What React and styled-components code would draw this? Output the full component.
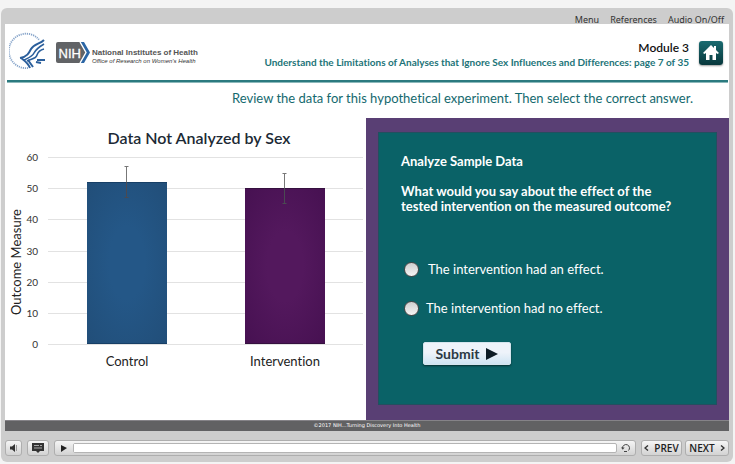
import React, { useState } from "react";
import styled, { createGlobalStyle, css } from "styled-components";

const color = {
  teal: "#0a6267",
  tealText: "#14696e",
  purple: "#593f74",
  frame: "#cdcdcd",
  footer: "#616163",
  ink: "#1c2a35",
};

const GlobalStyle = createGlobalStyle`
  * { box-sizing: border-box; }
  body {
    margin: 0;
    background: #f4f4f4;
    font-family: Lato, "Open Sans", sans-serif;
    font-variant-ligatures: none;
  }
  h1, h2, p { margin: 0; }
`;

const Page = styled.div`
  padding: 8px 2px 2px 1px;
`;

const Frame = styled.div`
  background: ${color.frame};
  border-radius: 6px;
  padding: 0 4px;
`;

const TopNav = styled.nav`
  display: flex;
  justify-content: flex-end;
  gap: 11px;
  height: 16px;
  padding: 5px 5px 0 0;
`;

const NavLink = styled.a`
  font-family: "Noto Sans", "Open Sans", sans-serif;
  font-size: 9px;
  line-height: 14px;
  color: #333;
  text-decoration: none;
`;

const Slide = styled.main`
  background: #fff;
`;

const Header = styled.header`
  display: flex;
  justify-content: space-between;
  height: 56px;
  padding: 8px 6px 0 4px;
`;

const Brand = styled.div`
  display: flex;
  align-items: flex-start;
`;

const NihMark = styled.div`
  padding: 10px 0 0 9px;
  line-height: 0;
`;

const BrandNames = styled.div`
  padding: 15px 0 0 2px;
  color: #555;
  white-space: nowrap;
  font-family: "Liberation Sans", Arial, sans-serif;
`;

const BrandName = styled.p`
  font-size: 8px;
  font-weight: bold;
  line-height: 11px;
`;

const BrandOffice = styled.p`
  font-size: 6px;
  font-style: italic;
  line-height: 6px;
  color: #333;
`;

const Heading = styled.div`
  display: flex;
  gap: 10px;
  text-align: right;
  white-space: nowrap;
`;

const Titles = styled.div`
  padding-top: 8px;
`;

const ModuleName = styled.p`
  font-size: 12px;
  font-weight: 600;
  line-height: 16px;
  color: #111;
`;

const Topic = styled.h1`
  font-size: 10px;
  font-weight: bold;
  line-height: 12px;
  color: #1c7478;
`;

const HomeButton = styled.button`
  display: grid;
  place-items: center;
  width: 24px;
  height: 24px;
  margin-top: 9px;
  padding: 0;
  border: 0;
  border-radius: 3px;
  background: linear-gradient(#1a6b70, #07373c);
  box-shadow: 0 1px 2px #0006;
`;

const Rule = styled.hr`
  height: 3px;
  margin: 0 1px 0 2px;
  border: 0;
  background: #2b7a7f;
  border-bottom: 1px solid #8cb9bb;
`;

const Instruction = styled.p`
  height: 35px;
  padding: 6px 36px 0 0;
  font-size: 13px;
  line-height: 18px;
  text-align: right;
  color: ${color.tealText};
`;

const Columns = styled.div`
  display: grid;
  grid-template-columns: 361fr 363fr;
`;

const Chart = styled.svg`
  display: block;
  width: 100%;
  font-family: Lato, sans-serif;
`;

const Quiz = styled.section`
  background: ${color.purple};
  padding: 14px 12px 15px 12px;
`;

const QuizForm = styled.form`
  height: 100%;
  padding: 20px 23px;
  background: ${color.teal};
  outline: 1px solid #234f5f;
  outline-offset: -1px;
  color: #fff;
`;

const QuizTitle = styled.h2`
  font-size: 13px;
  font-weight: bold;
  line-height: 18px;
`;

const Question = styled.legend`
  padding: 0;
  font-size: 13px;
  font-weight: bold;
  line-height: 15px;
`;

const Choices = styled.fieldset`
  margin: 14px 0 0;
  padding: 0;
  border: 0;
`;

const ChoiceList = styled.div`
  display: grid;
  gap: 21px;
  padding: 46px 0 0 3px;
`;

const Choice = styled.label`
  display: flex;
  align-items: center;
  gap: ${(p) => (p.$wide ? 9 : 7)}px;
  font-size: 13px;
  line-height: 18px;
`;

const Radio = styled.input`
  appearance: none;
  width: 15px;
  height: 15px;
  margin: 0;
  border: 1px solid #4c4646;
  border-radius: 50%;
  background: linear-gradient(#cfcfcf, #f4f4f4);
  &:checked {
    background: radial-gradient(circle, #222 3px, #e8e8e8 4px);
  }
`;

const Submit = styled.button`
  display: flex;
  align-items: center;
  justify-content: center;
  gap: 7px;
  width: 88px;
  height: 23px;
  margin: 25px 0 0 22px;
  padding: 0;
  border: 1px solid #d5e5ee;
  border-radius: 2px;
  background: linear-gradient(#eef3fa 45%, #cfe5f3);
  box-shadow: 0 1px 2px #0008;
  font: bold 14px/18px Lato, sans-serif;
  color: #2b3944;
`;

const Copyright = styled.footer`
  height: 11px;
  border-top: 1px solid #858388;
  background: ${color.footer};
  font-family: "DejaVu Sans", sans-serif;
  font-size: 5px;
  line-height: 9px;
  text-align: center;
  color: #fff;
`;

const Player = styled.div`
  display: flex;
  padding: 9px 0 6px;
`;

const raised = css`
  height: 16px;
  border: 1px solid #aeaeae;
  border-radius: 3px;
  background: linear-gradient(#f5f5f5, #d2d2d2);
`;

const PlayerButton = styled.button`
  ${raised}
  display: flex;
  align-items: center;
  justify-content: center;
  gap: 5px;
  width: ${(p) => p.$width}px;
  margin-right: ${(p) => p.$after || 0}px;
  padding: 0;
  font: 600 10px/14px "Open Sans", sans-serif;
  color: #222;
`;

const Timeline = styled.div`
  ${raised}
  display: flex;
  align-items: center;
  flex: 1;
  margin-right: 5px;
`;

const IconButton = styled.button`
  display: grid;
  place-items: center;
  width: 18px;
  height: 14px;
  padding: 0;
  border: 0;
  background: none;
`;

const Seek = styled.input`
  appearance: none;
  flex: 1;
  min-width: 0;
  height: 10px;
  margin: 0;
  border: 1px solid #b4b4b4;
  border-radius: 2px;
  background: #fff;
  &::-webkit-slider-thumb {
    appearance: none;
    width: 1px;
    height: 8px;
    background: #fff;
  }
`;

const HhsLogo = () => (
  <svg width="38" height="38" viewBox="0 0 38 38" role="img" aria-label="Department of Health and Human Services">
    <path d="M30 7.600A17.200 17.200 0 1 0 19 36" fill="none" stroke="#85a3c9" strokeWidth="1.8" strokeDasharray="1.2 .9" />
    <g fill="none" stroke="#2b5f9c" strokeLinejoin="round">
      <path d="M35 8C31 12 25 12 22 17C20 21 18 25 11 26" strokeWidth="2" />
      <path d="M35 12C30 15 27 17 25 21C23 25 19 26 15 28" strokeWidth="1.6" />
      <path d="M35 17C31 18 29 20 28 23C27 27 22 27 18 29" strokeWidth="1.6" />
      <path d="M12 26C16 29 19 31 21 36M19 28L24 35M28 28H36M27 30L32 31" strokeWidth="2" />
    </g>
  </svg>
);

const NihLogo = () => (
  <svg width="34" height="21" viewBox="0 0 34 21" role="img" aria-label="NIH">
    <path d="M2 0H24L30 10.500L24 21H2Q0 21 0 19V2Q0 0 2 0Z" fill="#616366" />
    <path d="M24 0H28L34 10.500L28 21H24L30 10.500Z" fill="#2c66a5" />
    <path d="M24 0L30 10.500L24 21" fill="none" stroke="#fff" strokeWidth="1.4" />
    <text x="2.500" y="15.500" fill="#fff" stroke="#fff" strokeWidth=".3" fontFamily="Liberation Sans" fontSize="13">NIH</text>
  </svg>
);

const HomeIcon = () => (
  <svg width="18" height="16" viewBox="0 0 18 16" aria-hidden="true">
    <path d="M9 0L1 8L2.500 9L4 8V15H7.500V10H10.500V15H14V8L15.500 9L17 8L14 5V1H12V3Z" fill="#fff" />
  </svg>
);

const Chevron = ({ d }) => (
  <svg width="5" height="6" viewBox="0 0 5 6" aria-hidden="true">
    <path d={d} fill="none" stroke="#333" strokeWidth="1.4" />
  </svg>
);

const PLOT = { top: 39, bottom: 226, left: 43, right: 358, max: 60 };
const yOf = (v) => Math.round(PLOT.bottom - (v * (PLOT.bottom - PLOT.top)) / PLOT.max);
const SERIES = [
  { label: "Control", value: 52, x: 82, fill: "url(#blue)", edge: "#173f66" },
  { label: "Intervention", value: 50, x: 240, fill: "url(#plum)", edge: "#35103f" },
];

const OutcomeChart = () => (
  <Chart viewBox="0 0 361 302" role="img" aria-label="Data Not Analyzed by Sex">
    <defs>
      <radialGradient id="blue" r="0.75">
        <stop offset="0.3" stopColor="#245787" />
        <stop offset="1" stopColor="#214d77" />
      </radialGradient>
      <radialGradient id="plum" r="0.75">
        <stop offset="0.3" stopColor="#53185d" />
        <stop offset="1" stopColor="#451050" />
      </radialGradient>
    </defs>
    <text x="194" y="26" textAnchor="middle" fontSize="16" fontWeight="600" fill={color.ink}>Data Not Analyzed by Sex</text>
    <text transform="translate(16 144) rotate(-90)" textAnchor="middle" fontSize="13" fill="#222">Outcome Measure</text>
    {[0, 10, 20, 30, 40, 50, 60].map((v) => (
      <g key={v}>
        <rect x={PLOT.left} y={yOf(v)} width={PLOT.right - PLOT.left} height="1" fill="#e2e2e2" />
        <text x="33" y={yOf(v) + 4} textAnchor="end" fontSize="10" fill="#333">{v}</text>
      </g>
    ))}
    {SERIES.map((s) => {
      const top = yOf(s.value);
      const high = yOf(s.value + 5);
      const low = yOf(s.value - 5);
      const mid = s.x + 39.5;
      return (
        <g key={s.label}>
          <rect x={s.x} y={top} width="80" height={PLOT.bottom - top} fill={s.fill} />
          <path d={`M${s.x} ${top + 0.5}h80M${s.x} ${PLOT.bottom - 0.5}h80`} stroke={s.edge} />
          <path d={`M${mid} ${high}V${top}M${mid - 2} ${high + 0.5}h4`} stroke="#777" fill="none" />
          <path d={`M${mid} ${top}V${low}M${mid - 2} ${low - 0.5}h4`} stroke="#4a4a52" fill="none" />
          <text x={s.x + 40} y="248" textAnchor="middle" fontSize="13" fill="#222">{s.label}</text>
        </g>
      );
    })}
  </Chart>
);

const CHOICES = [
  { value: "effect", text: "The intervention had an effect.", wide: true },
  { value: "none", text: "The intervention had no effect.", wide: false },
];

export default function App() {
  const [answer, setAnswer] = useState("");
  return (
    <Page>
      <GlobalStyle />
      <Frame>
        <TopNav>
          <NavLink href="#menu">Menu</NavLink>
          <NavLink href="#references">References</NavLink>
          <NavLink href="#audio">Audio On/Off</NavLink>
        </TopNav>
        <Slide>
          <Header>
            <Brand>
              <HhsLogo />
              <NihMark>
                <NihLogo />
              </NihMark>
              <BrandNames>
                <BrandName>National Institutes of Health</BrandName>
                <BrandOffice>Office of Research on Women's Health</BrandOffice>
              </BrandNames>
            </Brand>
            <Heading>
              <Titles>
                <ModuleName>Module 3</ModuleName>
                <Topic>Understand the Limitations of Analyses that Ignore Sex Influences and Differences: page 7 of 35</Topic>
              </Titles>
              <HomeButton aria-label="Home">
                <HomeIcon />
              </HomeButton>
            </Heading>
          </Header>
          <Rule />
          <Instruction>Review the data for this hypothetical experiment. Then select the correct answer.</Instruction>
          <Columns>
            <OutcomeChart />
            <Quiz>
              <QuizForm onSubmit={(e) => e.preventDefault()}>
                <QuizTitle>Analyze Sample Data</QuizTitle>
                <Choices>
                  <Question>
                    What would you say about the effect of the
                    <br />
                    tested intervention on the measured outcome?
                  </Question>
                  <ChoiceList>
                    {CHOICES.map((c) => (
                      <Choice key={c.value} $wide={c.wide}>
                        <Radio
                          type="radio"
                          name="answer"
                          value={c.value}
                          checked={answer === c.value}
                          onChange={() => setAnswer(c.value)}
                        />
                        {c.text}
                      </Choice>
                    ))}
                  </ChoiceList>
                </Choices>
                <Submit type="submit">
                  Submit
                  <svg width="12" height="14" viewBox="0 0 12 14" aria-hidden="true">
                    <path d="M0 1L12 7L0 13Z" fill="#0e1c26" />
                  </svg>
                </Submit>
              </QuizForm>
            </Quiz>
          </Columns>
          <Copyright>©2017 NIH...Turning Discovery Into Health</Copyright>
        </Slide>
        <Player>
          <PlayerButton $width={17} $after={5} aria-label="Volume">
            <svg width="10" height="8" viewBox="0 0 10 8" aria-hidden="true">
              <path d="M1 2.500H3L6 0V8L3 5.500H1Z" fill="#333" />
              <path d="M7.500 1V7" stroke="#999" />
            </svg>
          </PlayerButton>
          <PlayerButton $width={22} $after={5} aria-label="Captions">
            <svg width="12" height="10" viewBox="0 0 12 10" aria-hidden="true">
              <path d="M0 0H12V8H8L6 10L4 8H0Z" fill="#333" />
              <path d="M2 2.500H7M8 2.500H10M2 5H10" stroke="#aaa" />
            </svg>
          </PlayerButton>
          <Timeline>
            <IconButton aria-label="Play">
              <svg width="6" height="8" viewBox="0 0 6 8" aria-hidden="true">
                <path d="M0 1L6 4L0 8Z" fill="#222" />
              </svg>
            </IconButton>
            <Seek type="range" defaultValue="0" aria-label="Seek" />
            <IconButton aria-label="Replay">
              <svg width="10" height="10" viewBox="0 0 10 10" aria-hidden="true">
                <path d="M1.500 5A3.500 3.500 0 1 1 7.500 7.500M6 8.500H3" fill="none" stroke="#444" />
                <path d="M0 4.500H3.600L1.800 6.800Z" fill="#444" />
              </svg>
            </IconButton>
          </Timeline>
          <PlayerButton $width={41} $after={3}>
            <Chevron d="M4 0.500L1 3L4 5.500" />
            PREV
          </PlayerButton>
          <PlayerButton $width={44}>
            NEXT
            <Chevron d="M1 0.500L4 3L1 5.500" />
          </PlayerButton>
        </Player>
      </Frame>
    </Page>
  );
}
